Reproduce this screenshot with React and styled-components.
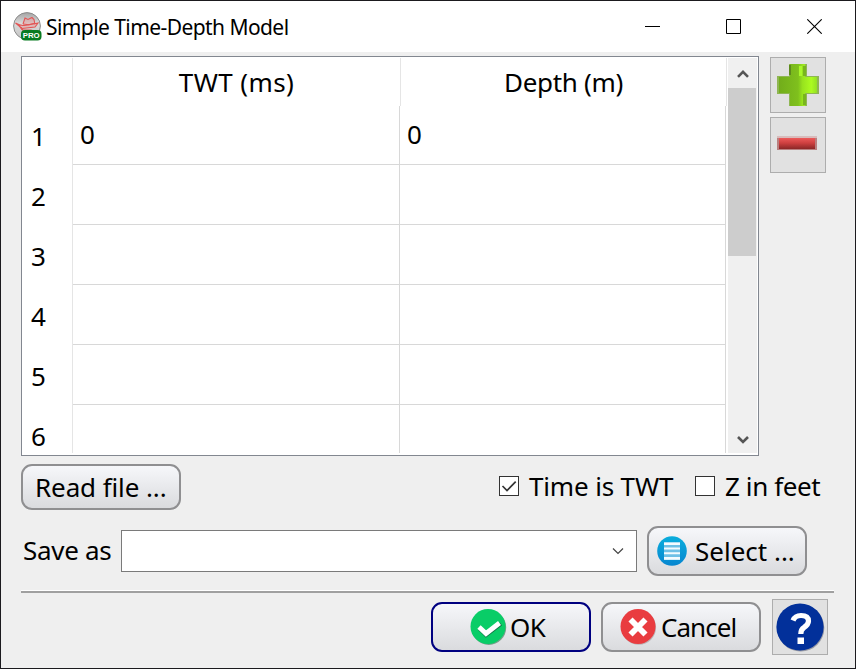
import React from "react";
import styled, { createGlobalStyle } from "styled-components";

const GlobalStyle = createGlobalStyle`
  * { box-sizing: border-box; }
  body { margin: 0; overflow: hidden; }
  button { font: inherit; color: inherit; }
`;

const Window = styled.div`
  width: 856px;
  height: 669px;
  display: flex;
  flex-direction: column;
  border: 1px solid #1b1a1e;
  background: #efefef;
  color: #000;
  font: 26px/30px "Noto Sans", "Open Sans", sans-serif;
`;

const TitleBar = styled.header`
  flex: none;
  height: 51px;
  display: flex;
  align-items: center;
  background: #fff;
  padding-left: 12px;
`;

const Title = styled.h1`
  flex: 1;
  margin: 1px 0 0 4px;
  font-size: 21px;
  font-weight: 400;
  line-height: 28px;
  letter-spacing: -0.57px;
  white-space: nowrap;
`;

const CaptionButton = styled.button`
  width: 81px;
  height: 50px;
  padding: 0;
  border: 0;
  background: none;
  display: flex;
  align-items: center;
  justify-content: center;
`;

const Content = styled.main`
  flex: 1;
  display: flex;
  flex-direction: column;
  padding: 4px 21px 0 20px;
`;

const TableArea = styled.section`
  display: flex;
  gap: 11px;
`;

const TableFrame = styled.div`
  width: 738px;
  height: 400px;
  display: flex;
  border: 1px solid #828790;
  background: #fff;
  padding: 1px 2px 2px 0;
`;

const Grid = styled.div`
  flex: none;
  width: 705px;
  height: 395px;
  overflow: hidden;
`;

const HeaderRow = styled.div`
  display: grid;
  grid-template-columns: 51px 328px 326px;
  height: 48px;
`;

const HeaderCell = styled.div`
  border-right: 1px solid #e5e5e5;
  display: flex;
  justify-content: center;
  padding-top: 9px;
  letter-spacing: ${(p) => p.$spacing || 0}px;
`;

const RowNumber = styled.div`
  border-right: 1px solid #e5e5e5;
  padding: 16px 0 0 9px;
`;

const Cell = styled.div`
  border-right: 1px solid #d8d8d8;
  border-bottom: 1px solid #d8d8d8;
  padding: 14px 0 0 7px;
`;

const Row = styled.div`
  display: grid;
  grid-template-columns: 51px 327px 326px;
  height: ${(p) => (p.$first ? 59 : 60)}px;

  ${RowNumber} { padding-top: ${(p) => (p.$first ? 15 : 16)}px; }
  ${Cell} { padding-top: ${(p) => (p.$first ? 13 : 14)}px; }
`;

const ScrollBar = styled.div`
  flex: none;
  width: 29px;
  height: 395px;
  margin-left: 1px;
  display: flex;
  flex-direction: column;
  background: #f0f0f0;
`;

const ScrollArrow = styled.div`
  height: 30px;
  display: flex;
  justify-content: center;
  align-items: center;
  padding-top: ${(p) => p.$drop || 0}px;
`;

const ScrollThumb = styled.div`
  width: 28px;
  height: 168px;
  margin-bottom: auto;
  background: #cdcdcd;
`;

const ToolColumn = styled.div`
  display: flex;
  flex-direction: column;
  gap: 4px;
  padding-top: 1px;
`;

const ToolButton = styled.button`
  width: 56px;
  height: 56px;
  padding: 0;
  border: 1px solid #adadad;
  background: #e1e1e1;
  display: flex;
  align-items: center;
  justify-content: center;
`;

const PushButton = styled.button`
  width: 160px;
  height: ${(p) => p.$height || 50}px;
  padding: 0 0 0 ${(p) => p.$inset}px;
  border: 2px solid ${(p) => (p.$primary ? "#000080" : "#8f8f91")};
  border-radius: 11px;
  background: linear-gradient(#f6f7fa, #dadbde);
  display: flex;
  align-items: center;
  gap: ${(p) => p.$gap || 0}px;
  letter-spacing: ${(p) => p.$spacing || 0}px;
  white-space: nowrap;

  svg { flex: none; }
`;

const OptionsRow = styled.section`
  display: flex;
  align-items: flex-start;
  margin-top: 8px;
`;

const Option = styled.label`
  width: ${(p) => p.$width}px;
  display: flex;
  align-items: center;
  gap: 10px;
  margin-top: 7px;
  margin-left: ${(p) => p.$before}px;
  letter-spacing: ${(p) => p.$spacing || 0}px;
  white-space: nowrap;
`;

const CheckBox = styled.span`
  flex: none;
  width: 20px;
  height: 20px;
  border: 1px solid #333;
  background: #fff;
  display: flex;
`;

const SaveRow = styled.section`
  display: flex;
  align-items: center;
  margin-top: 16px;
`;

const FieldLabel = styled.label`
  width: 100px;
  padding: 0 0 2px 2px;
  letter-spacing: -0.3px;
  white-space: nowrap;
`;

const ComboBox = styled.div`
  width: 516px;
  height: 42px;
  margin-right: 10px;
  border: 1px solid #7a7a7a;
  background: #fff;
  display: flex;
  align-items: center;
  justify-content: flex-end;
  padding-right: 12px;
`;

const Separator = styled.hr`
  width: 813px;
  height: 3px;
  margin: 14px 0 0;
  border: 0;
  border-top: 1px solid #fff;
  background: #a0a0a0;
`;

const Footer = styled.footer`
  display: flex;
  align-items: center;
  gap: 10px;
  margin-top: 6px;
  padding-left: 410px;

  ${ToolButton} { margin-left: 1px; }
`;

const AppLogo = () => (
  <svg width="29" height="29" viewBox="0 0 29 29">
    <defs>
      <linearGradient id="logoDisc" x1="0" y1="0" x2="0" y2="1">
        <stop offset="0" stopColor="#a4a4a4" />
        <stop offset=".4" stopColor="#dadada" />
        <stop offset="1" stopColor="#c4c4c4" />
      </linearGradient>
    </defs>
    <circle cx="14" cy="14" r="13.4" fill="url(#logoDisc)" stroke="#8b8b8b" />
    <path d="M2.5 11q5 3 8.500 2.500t14-2.500l-3 4-13 1.500zM10 12l2-6 3 1.500 4-2 2 2 1 5" fill="#e88" fillOpacity=".35" stroke="#e25555" strokeWidth="1.1" />
    <path d="M5 12l4 6h9l7 2M8 15l3 5M10 12q6 2 12-1" fill="none" stroke="#e25555" strokeWidth="1" />
    <rect x="8" y="18" width="20.5" height="10.500" rx="4" fill="#087a21" />
    <text x="18.2" y="26.3" textAnchor="middle" fill="#fff" fontFamily="Liberation Sans, sans-serif" fontSize="8" fontWeight="700" textLength="17" lengthAdjust="spacingAndGlyphs">PRO</text>
  </svg>
);

const PlusIcon = () => (
  <svg width="42" height="42" viewBox="0 0 42 42">
    <defs>
      <linearGradient id="plusFill">
        <stop offset="0" stopColor="#72ad1b" />
        <stop offset=".5" stopColor="#7fc01d" />
        <stop offset=".62" stopColor="#98e31e" />
        <stop offset=".85" stopColor="#acfb20" />
        <stop offset="1" stopColor="#94e024" />
      </linearGradient>
    </defs>
    <path d="M12 0h18v12h12v18H30v12H12V30H0V12h12z" fill="#8fb653" />
    <path d="M13 0h15v13h12v16H28v13H13V29H2V13h11z" fill="url(#plusFill)" />
    <path d="M12 1h2v10h-2z" fill="#5d8a1c" />
    <path d="M26 2h3v10h-3zM26 30h3v11h-3z" fill="#79b51e" />
    <path d="M22 2h3v10h-3z" fill="#aaf72b" />
  </svg>
);

const MinusIcon = () => (
  <svg width="42" height="42" viewBox="0 0 42 42">
    <defs>
      <linearGradient id="minusFill" x1="0" y1="0" x2="0" y2="1">
        <stop offset="0" stopColor="#ec5a5a" />
        <stop offset=".45" stopColor="#cf4040" />
        <stop offset="1" stopColor="#8b2727" />
      </linearGradient>
    </defs>
    <path d="M0 12h40v2H0z" fill="#d8bcbc" />
    <path d="M0 14h40v12H0z" fill="#b98080" />
    <path d="M2 14h36v11H2z" fill="url(#minusFill)" />
  </svg>
);

const ListIcon = () => (
  <svg width="30" height="30" viewBox="0 0 30 30">
    <defs>
      <linearGradient id="listDisc" x1="0" y1="0" x2="0" y2="1">
        <stop offset="0" stopColor="#0aaddc" />
        <stop offset="1" stopColor="#0786d0" />
      </linearGradient>
    </defs>
    <circle cx="15" cy="15" r="14.8" fill="url(#listDisc)" />
    <path d="M7 6h16v18H7z" fill="#6fc0e6" />
    <path d="M7 6.500h16v2.500H7zm0 5h16v2H7zm0 4.800h16v2H7zm0 4.800h16v2.700H7z" fill="#f4fbff" />
  </svg>
);

const OkIcon = () => (
  <svg width="37" height="38" viewBox="0 0 37 38">
    <circle cx="18.800" cy="19.500" r="17.400" fill="#5d8d73" opacity=".8" />
    <circle cx="18" cy="18.500" r="17.500" fill="#09cd67" />
    <path d="M9.500 21l6.500 6.500L31 16" fill="none" stroke="#147848" strokeWidth="3.500" />
    <path d="M9 19l7 6.500L29.500 15" fill="none" stroke="#fff" strokeWidth="4.800" />
  </svg>
);

const CancelIcon = () => (
  <svg width="37" height="38" viewBox="0 0 37 38">
    <circle cx="18.800" cy="19.500" r="17.300" fill="#aaa0a3" opacity=".7" />
    <circle cx="18" cy="18.500" r="17.500" fill="#e93c40" />
    <path d="M10.500 11.500l15 15M25.500 11.500l-15 15" stroke="#fff" strokeWidth="5.800" />
  </svg>
);

const HelpIcon = () => (
  <svg width="50" height="50" viewBox="0 0 50 50">
    <circle cx="25.700" cy="26" r="23.600" fill="#777b89" opacity=".7" />
    <circle cx="25" cy="25" r="23.600" fill="#02309a" />
    <path d="M18 18.500q2-5 8-5 7.500 0 7.500 5.500 0 3.500-4.500 6.500-3.200 2-3.200 6.500" fill="none" stroke="#fff" strokeWidth="5.200" />
    <path d="M22.500 35.500H29V42h-6.500z" fill="#fff" />
  </svg>
);

const Chevron = ({ up }) => (
  <svg width="12" height="10" viewBox="0 0 12 10">
    <path d={up ? "M1 7.800l5-5 5 5" : "M1 2l5 5 5-5"} fill="none" stroke="#555" strokeWidth="2.600" />
  </svg>
);

const rows = [["0", "0"], ["", ""], ["", ""], ["", ""], ["", ""], ["", ""]];

export default function App() {
  return (
    <Window>
      <GlobalStyle />
      <TitleBar>
        <AppLogo />
        <Title>Simple Time-Depth Model</Title>
        <CaptionButton aria-label="Minimize">
          <svg width="15" height="15"><path d="M0 7.500h15" stroke="#000" /></svg>
        </CaptionButton>
        <CaptionButton aria-label="Maximize">
          <svg width="15" height="15"><path d="M.5.5h14v14H.5z" fill="none" stroke="#000" /></svg>
        </CaptionButton>
        <CaptionButton aria-label="Close">
          <svg width="15" height="15"><path d="M.3.3l14.400 14.400M14.700.3L.3 14.700" stroke="#000" strokeWidth="1.100" /></svg>
        </CaptionButton>
      </TitleBar>
      <Content>
        <TableArea>
          <TableFrame>
            <Grid>
              <HeaderRow>
                <HeaderCell />
                <HeaderCell $spacing={0.4}>TWT (ms)</HeaderCell>
                <HeaderCell $spacing={-0.3}>Depth (m)</HeaderCell>
              </HeaderRow>
              {rows.map(([time, depth], i) => (
                <Row key={i} $first={i === 0}>
                  <RowNumber>{i + 1}</RowNumber>
                  <Cell>{time}</Cell>
                  <Cell>{depth}</Cell>
                </Row>
              ))}
            </Grid>
            <ScrollBar>
              <ScrollArrow $drop={2}><Chevron up /></ScrollArrow>
              <ScrollThumb />
              <ScrollArrow $drop={3}><Chevron /></ScrollArrow>
            </ScrollBar>
          </TableFrame>
          <ToolColumn>
            <ToolButton aria-label="Add row"><PlusIcon /></ToolButton>
            <ToolButton aria-label="Remove row"><MinusIcon /></ToolButton>
          </ToolColumn>
        </TableArea>
        <OptionsRow>
          <PushButton $height={46} $inset={12} $spacing={-0.1}>Read file ...</PushButton>
          <Option $before={318} $width={175} $spacing={-0.15}>
            <CheckBox>
              <svg width="18" height="18"><path d="M2.500 9l4.500 4.500L15.700 4.700" fill="none" stroke="#333" strokeWidth="1.700" /></svg>
            </CheckBox>
            Time is TWT
          </Option>
          <Option $before={21} $width={127} $spacing={-0.4}>
            <CheckBox />
            Z in feet
          </Option>
        </OptionsRow>
        <SaveRow>
          <FieldLabel>Save as</FieldLabel>
          <ComboBox>
            <svg width="12" height="8"><path d="M1 1.500l5 5 5-5" fill="none" stroke="#444" strokeWidth="1.200" /></svg>
          </ComboBox>
          <PushButton $inset={8} $gap={8} $spacing={0}><ListIcon />Select ...</PushButton>
        </SaveRow>
        <Separator />
        <Footer>
          <PushButton $inset={37} $gap={3} $spacing={-0.6} $primary><OkIcon />OK</PushButton>
          <PushButton $inset={17} $gap={4} $spacing={-0.95}><CancelIcon />Cancel</PushButton>
          <ToolButton aria-label="Help"><HelpIcon /></ToolButton>
        </Footer>
      </Content>
    </Window>
  );
}
